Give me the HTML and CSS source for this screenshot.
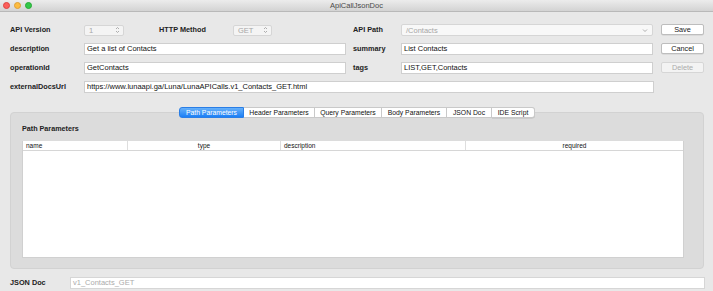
FILE: index.html
```html
<!DOCTYPE html>
<html lang="en">
<head>
    <meta charset="UTF-8">
    <title>ApiCallJsonDoc</title>
    <link rel="stylesheet" href="styles.css">
</head>
<body>

    <header class="titlebar">
        <div class="lights">
            <span class="light red"></span>
            <span class="light yellow"></span>
            <span class="light green"></span>
        </div>
        <div class="title">ApiCallJsonDoc</div>
        <div></div>
    </header>

    <!-- top form -->
    <div class="form">
        <label class="lbl">API Version</label>
        <div class="row1">
            <div class="spin spin-ver">
                <span>1</span>
                <svg width="5" height="8" viewBox="0 0 5 8"><path d="M1 3 L2.5 1.5 L4 3 M1 5 L2.5 6.5 L4 5" fill="none" stroke="#9a9a9a" stroke-width="0.8"/></svg>
            </div>
            <label class="lbl lbl-method">HTTP Method</label>
            <div class="spin spin-method">
                <span>GET</span>
                <svg width="5" height="8" viewBox="0 0 5 8"><path d="M1 3 L2.5 1.5 L4 3 M1 5 L2.5 6.5 L4 5" fill="none" stroke="#9a9a9a" stroke-width="0.8"/></svg>
            </div>
        </div>
        <label class="lbl lbl-r">API Path</label>
        <div class="combo">
            <span>/Contacts</span>
            <svg width="6" height="5" viewBox="0 0 6 5"><path d="M1 1.5 L3 3.5 L5 1.5" fill="none" stroke="#9a9a9a" stroke-width="0.8"/></svg>
        </div>
        <button class="btn">Save</button>

        <label class="lbl">description</label>
        <div class="field">Get a list of Contacts</div>
        <label class="lbl lbl-r">summary</label>
        <div class="field">List Contacts</div>
        <button class="btn">Cancel</button>

        <label class="lbl">operationId</label>
        <div class="field">GetContacts</div>
        <label class="lbl lbl-r">tags</label>
        <div class="field">LIST,GET,Contacts</div>
        <button class="btn" disabled>Delete</button>

        <label class="lbl">externalDocsUrl</label>
        <div class="field field-wide">https://www.lunaapi.ga/Luna/LunaAPICalls.v1_Contacts_GET.html</div>
    </div>

    <!-- tab box -->
    <div class="tabbox">
        <div class="tabs">
            <div class="tab active">Path Parameters</div>
            <div class="tab">Header Parameters</div>
            <div class="tab">Query Parameters</div>
            <div class="tab">Body Parameters</div>
            <div class="tab">JSON Doc</div>
            <div class="tab">IDE Script</div>
        </div>
        <h2 class="section">Path Parameters</h2>
        <div class="table">
            <div class="thead">
                <div class="th">name</div>
                <div class="th th-center">type</div>
                <div class="th">description</div>
                <div class="th th-center">required</div>
            </div>
        </div>
    </div>

    <div class="docrow">
        <label class="lbl lbl-doc">JSON Doc</label>
        <div class="field field-doc">v1_Contacts_GET</div>
    </div>

</body>
</html>
```

FILE: styles.css
```css
body {
    font-family: "Liberation Sans", Arial, sans-serif;
    font-size: 7.5px;
    background-color: #e8e8e8;
    color: #1a1a1a;
    margin: 0;
    padding: 0;
    width: 713px;
    height: 291px;
    overflow: hidden;
}

.titlebar {
    display: grid;
    grid-template-columns: 1fr auto 1fr;
    align-items: center;
    height: 12px;
    background: linear-gradient(#ececec, #d3d3d3);
    border-bottom: 1px solid #b9b9b9;
    box-sizing: border-box;
}

.lights {
    display: flex;
    gap: 4px;
    padding-left: 3px;
}

.light {
    width: 7px;
    height: 7px;
    border-radius: 50%;
    box-sizing: border-box;
}

.red { background: #fc605c; border: 0.5px solid #de4440; }
.yellow { background: #fdbc40; border: 0.5px solid #de9f34; }
.green { background: #34c84a; border: 0.5px solid #27aa35; }

.title {
    font-size: 7.5px;
    color: #4a4a4a;
}

.form {
    display: grid;
    grid-template-columns: 74px 262px 55px 252px 51px;
    grid-auto-rows: 12px;
    row-gap: 7px;
    padding: 12px 0 0 10px;
}

.lbl {
    font-size: 7.3px;
    font-weight: bold;
    line-height: 12px;
    color: #222;
}

.lbl-r {
    padding-left: 7px;
}

.row1 {
    display: flex;
    align-items: center;
}

.lbl-method {
    width: 74px;
    margin-left: 35px;
}

.spin, .combo {
    display: flex;
    align-items: center;
    justify-content: space-between;
    height: 11px;
    box-sizing: border-box;
    background: #f4f4f4;
    border: 1px solid #d6d6d6;
    border-radius: 2px;
    padding: 0 3px 0 4px;
    color: #a6a6a6;
}

.spin-ver { width: 40px; }
.spin-method { width: 39px; }

.combo {
    height: 12px;
    padding-right: 4px;
    background: #f8f8f8;
}

.field {
    height: 12px;
    line-height: 10px;
    box-sizing: border-box;
    padding: 0 2px;
    border: 1px solid #cfcfcf;
    background: white;
    color: #111;
    white-space: nowrap;
}

.field-wide {
    grid-column: 2 / 5;
    width: 570px;
}

.btn {
    justify-self: end;
    width: 43px;
    height: 11px;
    padding: 0;
    font-family: inherit;
    font-size: 7.3px;
    color: #1a1a1a;
    background: white;
    border: 1px solid #bdbdbd;
    border-radius: 2px;
    box-shadow: 0 0.5px 0.5px rgba(0, 0, 0, 0.12);
}

.btn:disabled {
    color: #ababab;
    background: #f3f3f3;
    border-color: #d6d6d6;
    box-shadow: none;
}

.tabbox {
    margin: 19px 9px 0 10px;
    height: 157px;
    box-sizing: border-box;
    background: #dcdcdc;
    border: 1px solid #d2d2d2;
    border-radius: 4px;
    padding: 0 19px 0 11px;
}

.tabs {
    display: flex;
    justify-content: center;
    margin: -6px -8px 0 0;
}

.tab {
    height: 11px;
    line-height: 10px;
    box-sizing: border-box;
    text-align: center;
    background: white;
    border: 1px solid #c9c9c9;
    border-left: none;
    font-size: 6.8px;
    color: #111;
}

.tab:first-child {
    border-left: 1px solid #c9c9c9;
    border-radius: 3px 0 0 3px;
}

.tab:last-child {
    border-radius: 0 3px 3px 0;
    box-shadow: 0 0.5px 0.5px rgba(0, 0, 0, 0.15);
}

.tab.active {
    background: linear-gradient(#68b1fa, #1b7ff5);
    border-color: #2a7ee6;
    color: white;
}

.tab:nth-child(1) { width: 65px; }
.tab:nth-child(2) { width: 71px; }
.tab:nth-child(3) { width: 67px; }
.tab:nth-child(4) { width: 65px; }
.tab:nth-child(5) { width: 45px; }
.tab:nth-child(6) { width: 43px; }

.section {
    margin: 0;
    padding-top: 6px;
    height: 17px;
    box-sizing: border-box;
    font-size: 7.2px;
    line-height: 10px;
    font-weight: bold;
    color: #222;
}

.table {
    height: 116px;
    background: white;
    border: 1px solid #d0d0d0;
    border-top: none;
    margin-top: 6px;
}

.thead {
    display: grid;
    grid-template-columns: 105px 153px 185px 1fr;
    height: 9px;
    border-bottom: 1px solid #d6d6d6;
}

.th {
    font-size: 6.5px;
    line-height: 9px;
    padding-left: 3px;
    color: #111;
    border-right: 1px solid #dedede;
}

.th:last-child {
    border-right: none;
}

.th-center {
    text-align: center;
    padding-left: 0;
}

.docrow {
    display: flex;
    align-items: center;
    margin-top: 8px;
    padding-left: 10px;
}

.lbl-doc {
    width: 60px;
}

.field-doc {
    width: 635px;
    color: #ababab;
    border-color: #d6d6d6;
}
```
